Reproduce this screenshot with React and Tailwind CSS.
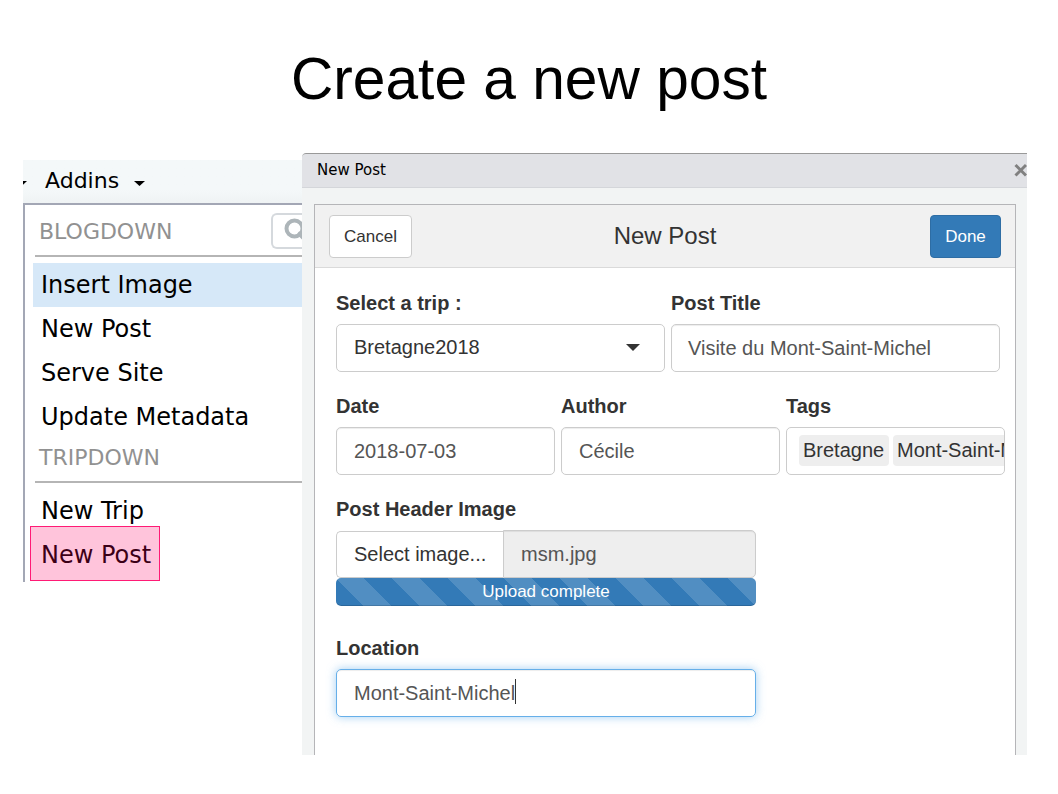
const sans = 'font-["Liberation_Sans",Arial,sans-serif]';
const dejavu = 'font-["DejaVu_Sans",sans-serif]';

function Caret({ className }) {
  return (
    <svg viewBox="0 0 12 6" preserveAspectRatio="none" className={className} fill="currentColor">
      <path d="M0 0H12L6 6Z" />
    </svg>
  );
}

function MenuHeading({ children }) {
  return <span className="whitespace-nowrap text-[22px] leading-[26px] text-[#919191]">{children}</span>;
}

function MenuItem({ active, children }) {
  return (
    <li
      className={
        active
          ? "h-11 bg-[#d6e8f8] pl-2 text-2xl leading-[45px] whitespace-nowrap"
          : "h-11 pl-2 text-2xl leading-[45px] whitespace-nowrap"
      }
    >
      {children}
    </li>
  );
}

function AddinsMenu() {
  return (
    <section className={`mt-[7px] h-[422px] w-[279px] shrink-0 text-black ${dejavu}`}>
      <div className="flex h-[43px] items-start overflow-hidden bg-gradient-to-b from-[#f4f8f9] from-70% to-[#eff3f4]">
        <Caret className="mt-[21px] -ml-[7px] h-[5px] w-[11px] shrink-0" />
        <span className="ml-[18px] text-[22px] leading-[42px]">Addins</span>
        <Caret className="mt-[21px] ml-[15px] h-[5px] w-[11px] shrink-0" />
      </div>
      <div className="h-[379px] border-t-2 border-l-2 border-[#a3a7b5] bg-white">
        <div className="ml-[10px] flex h-[52px] justify-between overflow-hidden border-b-2 border-[#b5b5b5] pl-1">
          <div className="pt-[14px]">
            <MenuHeading>BLOGDOWN</MenuHeading>
          </div>
          <div className="mt-2 h-9 w-[31px] overflow-hidden rounded-l-md border-2 border-r-0 border-[#d5d9dd] pl-[11px]">
            <svg viewBox="0 0 28 28" className="mt-[3px] size-7" fill="none" stroke="#adb5b9" strokeWidth="4">
              <circle cx="10.5" cy="10.5" r="8" />
              <path d="M16 16L24 24" strokeWidth="5" strokeLinecap="round" />
            </svg>
          </div>
        </div>
        <ul className="mt-[6px] ml-2">
          <MenuItem active>Insert Image</MenuItem>
          <MenuItem>New Post</MenuItem>
          <MenuItem>Serve Site</MenuItem>
          <MenuItem>Update Metadata</MenuItem>
        </ul>
        <div className="ml-[10px] h-[44px] border-b-2 border-[#b5b5b5] pt-[6px] pl-1">
          <MenuHeading>TRIPDOWN</MenuHeading>
        </div>
        <ul className="mt-[6px] ml-2">
          <MenuItem>New Trip</MenuItem>
          <li className="relative h-11 pl-2 text-2xl leading-[45px]">
            New Post
            <span className="absolute -top-[7px] -left-[3px] h-[55px] w-[130px] border-[1.5px] border-[#ff1a75] bg-[#ff0066]/23" />
          </li>
        </ul>
      </div>
    </section>
  );
}

function Field({ label, className, children }) {
  return (
    <div className={className}>
      <div className="h-[33px] text-xl leading-[24px] font-bold whitespace-nowrap">{label}</div>
      {children}
    </div>
  );
}

function Input({ children }) {
  return (
    <div className="h-12 rounded-[5px] border border-[#ccc] bg-white pl-[17px] text-xl leading-[46px] text-[#555] shadow-[inset_0_1px_1px_rgba(0,0,0,0.075)]">
      {children}
    </div>
  );
}

function PostForm() {
  return (
    <div className="pt-[23px] pl-[21px] text-[#333]">
      <div className="flex h-[103px] gap-[6px]">
        <Field label="Select a trip :" className="w-[329px]">
          <div className="flex h-12 items-start justify-between rounded-[5px] border border-[#ccc] pr-[24px] pl-[17px] text-xl leading-[44px]">
            Bretagne2018
            <Caret className="mt-[19px] h-[7px] w-[14px]" />
          </div>
        </Field>
        <Field label="Post Title" className="w-[329px]">
          <Input><span className="-ml-px">Visite du Mont-Saint-Michel</span></Input>
        </Field>
      </div>
      <div className="flex h-[103px] gap-[6px]">
        <Field label="Date" className="w-[219px]">
          <Input>2018-07-03</Input>
        </Field>
        <Field label="Author" className="w-[219px]">
          <Input>Cécile</Input>
        </Field>
        <Field label="Tags" className="w-[219px]">
          <div className="flex h-12 gap-1 overflow-hidden rounded-[5px] border border-[#ccc] pt-[7px] pl-[12px] text-xl leading-[31px]">
            <span className="h-[31px] w-[90px] shrink-0 rounded bg-[#eee] px-[4px]">Bretagne</span>
            <span className="h-[31px] shrink-0 rounded bg-[#eee] px-[4px]">Mont-Saint-Michel</span>
          </div>
        </Field>
      </div>
      <Field label="Post Header Image" className="h-[139px] w-[420px]">
        <div className="flex h-12 items-end text-xl">
          <div className="h-[47px] w-[167px] rounded-l-[5px] border border-r-0 border-[#ccc] bg-white pl-[17px] leading-[44px] whitespace-nowrap">
            Select image...
          </div>
          <div className="h-12 w-[253px] rounded-r-[5px] border border-[#ccc] bg-[#eee] pl-[17px] leading-[46px] text-[#555] shadow-[inset_0_1px_1px_rgba(0,0,0,0.075)]">
            msm.jpg
          </div>
        </div>
        <div className="h-7 rounded-[5px] bg-[#337ab7] bg-[linear-gradient(45deg,rgba(255,255,255,0.15)_25%,transparent_25%,transparent_50%,rgba(255,255,255,0.15)_50%,rgba(255,255,255,0.15)_75%,transparent_75%,transparent)] bg-size-[56px_56px] text-center text-[17px] leading-[27px] text-white shadow-[inset_0_-1px_0_rgba(0,0,0,0.15)]">
          Upload complete
        </div>
      </Field>
      <Field label="Location" className="w-[420px]">
        <div className="flex h-12 items-center rounded-[5px] border border-[#66afe9] pl-[17px] text-xl text-[#555] shadow-[inset_0_1px_1px_rgba(0,0,0,0.075),0_0_10px_rgba(102,175,233,0.6)]">
          Mont-Saint-Michel
          <span className="-mt-1 h-[25px] w-px bg-[#333]" />
        </div>
      </Field>
    </div>
  );
}

function NewPostDialog() {
  return (
    <section className={`flex h-[602px] w-[725px] shrink-0 flex-col overflow-hidden rounded-tl-[4px] bg-[#f2f4f4] ${sans}`}>
      <header className="flex h-[35px] shrink-0 justify-between rounded-tl-[4px] border-t border-b border-t-[#999] border-b-[#d4d6da] bg-[#e1e2e6] pl-[15px] text-black">
        <span className={`text-[15px] leading-[33px] ${dejavu}`}>New Post</span>
        <svg viewBox="0 0 13 14" className="mt-[9px] h-[14px] w-[13px]" fill="none" stroke="#808080" strokeWidth="3">
          <path d="M1.5 2L12 12.5M12 2L1.5 12.5" />
        </svg>
      </header>
      <div className="mt-4 ml-3 w-[702px] grow border border-b-0 border-[#b5b5b8] bg-white">
        <div className="flex h-[63px] items-start justify-between border-b border-[#dadada] bg-[#f1f1f1] px-[14px] pt-[10px]">
          <button className="h-[43px] w-[83px] rounded-[4px] border border-[#ccc] bg-white text-[17px] leading-[41px] text-[#333]">
            Cancel
          </button>
          <h2 className="mr-[12px] text-2xl leading-[41px] text-[#333]">New Post</h2>
          <button className="h-[43px] w-[71px] rounded-[4px] border border-[#2e6da4] bg-[#337ab7] text-[17px] leading-[41px] text-white">
            Done
          </button>
        </div>
        <PostForm />
      </div>
    </section>
  );
}

export default function App() {
  return (
    <main className="h-[794px] w-[1058px] overflow-hidden bg-white">
      <h1 className={`h-[153px] pt-[45px] text-center text-[58.67px] leading-[68px] text-black ${sans}`}>
        Create a new post
      </h1>
      <div className="flex items-start pl-[23px]">
        <AddinsMenu />
        <NewPostDialog />
      </div>
    </main>
  );
}
